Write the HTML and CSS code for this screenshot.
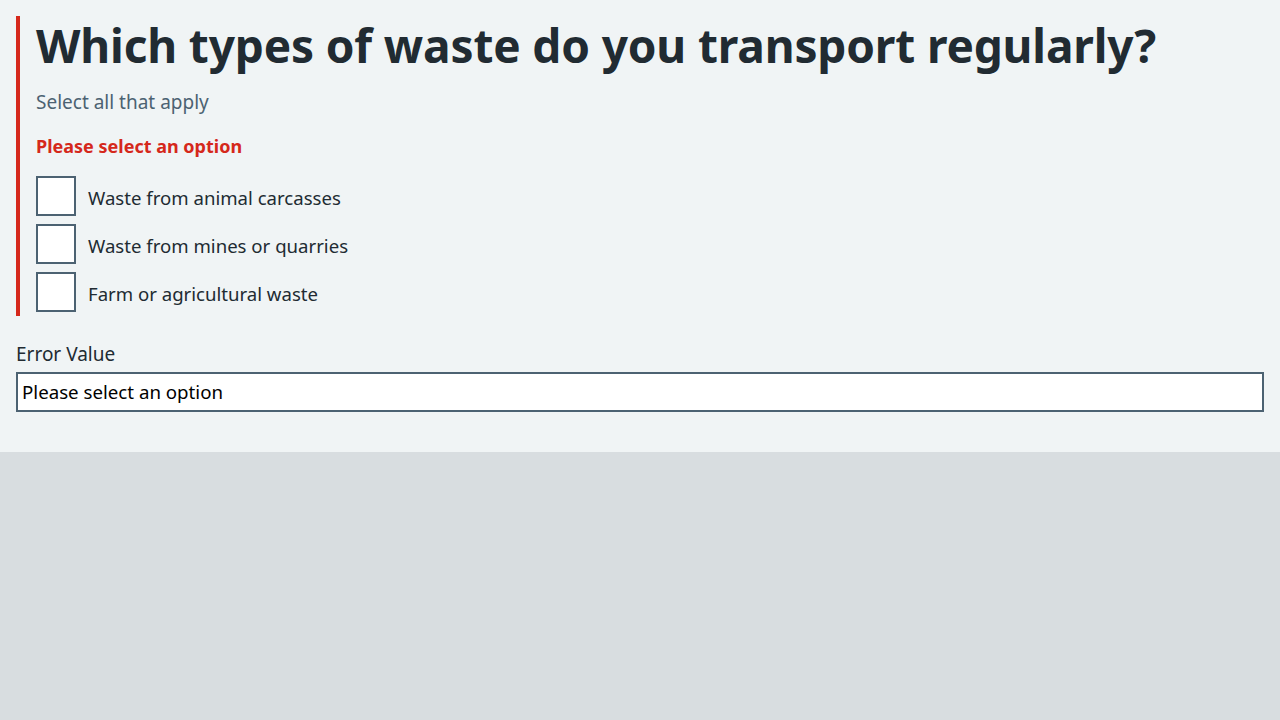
FILE: index.html
```html
<!DOCTYPE html>
<html>
<head>
<meta charset="utf-8">
<link rel="stylesheet" href="styles.css">
</head>
<body>
<div class="panel">
  <fieldset class="group error">
    <h1 class="title">Which types of waste do you transport regularly?</h1>
    <div class="hint">Select all that apply</div>
    <div class="err">Please select an option</div>
    <div class="boxes">
      <label class="item"><span class="box"></span><span class="lbl">Waste from animal carcasses</span></label>
      <label class="item"><span class="box"></span><span class="lbl">Waste from mines or quarries</span></label>
      <label class="item"><span class="box"></span><span class="lbl">Farm or agricultural waste</span></label>
    </div>
  </fieldset>
  <div class="field">
    <div class="flabel">Error Value</div>
    <div class="input">Please select an option</div>
  </div>
</div>
</body>
</html>
```
FILE: styles.css
```css
html, body { margin: 0; padding: 0; }
body {
  background: #d8dde0;
  font-family: "Noto Sans", "Open Sans", sans-serif;
  color: #212b32;
  width: 1280px;
  height: 720px;
}
.panel {
  background: #f0f4f5;
  padding: 16px 16px 40px 16px;
  height: 396px;
}
.group {
  margin: 0;
  border: 0;
  border-left: 4px solid #d5281b;
  padding: 0 0 4px 16px;
}
.title {
  margin: 0;
  font-size: 46px;
  line-height: 58px;
  font-weight: 700;
  color: #212b32;
  letter-spacing: -0.15px;
}
.hint {
  margin-top: 14px;
  font-size: 19px;
  line-height: 28px;
  color: #4c6272;
}
.err {
  margin-top: 16px;
  font-size: 18px;
  line-height: 28px;
  font-weight: 700;
  color: #d5281b;
}
.boxes {
  margin-top: 16px;
  display: flex;
  flex-direction: column;
  gap: 8px;
}
.item {
  display: flex;
  align-items: center;
  gap: 12px;
  height: 40px;
}
.box {
  box-sizing: border-box;
  width: 40px;
  height: 40px;
  border: 2px solid #4c6272;
  background: #fff;
}
.lbl {
  font-size: 18.6px;
  line-height: 28px;
  margin-top: 4px;
  color: #212b32;
}
.field { margin-top: 24px; }
.flabel {
  font-size: 19px;
  line-height: 28px;
  color: #212b32;
}
.input {
  margin-top: 4px;
  box-sizing: border-box;
  height: 40px;
  border: 2px solid #4c6272;
  background: #fff;
  padding: 0 4px;
  font-size: 18.7px;
  line-height: 36px;
  color: #000;
}
```
